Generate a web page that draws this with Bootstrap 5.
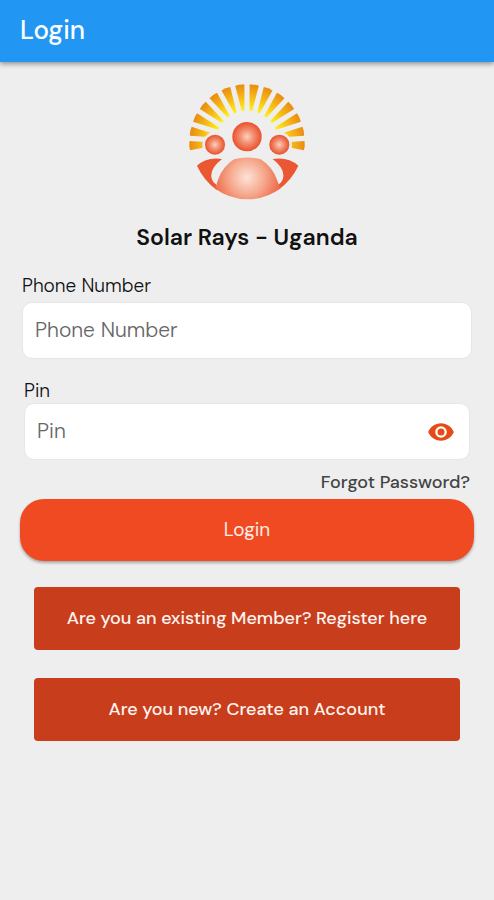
<!DOCTYPE html>
<html lang="en">
<head>
<meta charset="utf-8">
<meta name="viewport" content="width=device-width, initial-scale=1">
<title>Login</title>
<link href="https://cdn.jsdelivr.net/npm/bootstrap@5.3.0/dist/css/bootstrap.min.css" rel="stylesheet">
<style>
body { background: #eee; color: #111; font-family: "DM Sans", Inter, "Liberation Sans", sans-serif; }
.top-bar { background: #2196f3; height: 62px; padding-bottom: 2px; box-shadow: 0 2px 5px rgba(0,0,0,.4); }
.top-title { font-size: 26px; line-height: 32px; font-weight: 500; }
.logo { width: 120px; height: 120px; }
.org-name { font-size: 23px; line-height: 30px; font-weight: 600; }
.login-form { padding-top: 22px; }
.field-label { font-size: 19px; line-height: 24px; font-weight: 300; }
.field-box { background: #fff; border: 1px solid #e6e6e6; border-radius: 10px; height: 57px; }
.field-box .form-control { font-size: 21px; line-height: 28px; font-weight: 300; color: #222; padding-bottom: 8px; }
.field-box .form-control::placeholder { color: #666; }
.phone-group { padding: 0 2px; }
.phone-box { margin-top: 4px; }
.pin-group { padding: 20px 4px 0; }
.eye { color: #e64a19; margin-right: 14px; }
.forgot { font-size: 18px; line-height: 24px; color: #444; font-weight: 500; }
.forgot-row { padding: 10px 0 4px; }
.btn-login { background: #f04a22; color: #ffe9e0; font-size: 19px; height: 62px; border-radius: 24px; box-shadow: 0 2px 3px rgba(0,0,0,.3); }
.btn-alt { background: #c83e1d; color: #fff3ee; font-size: 18px; font-weight: 500; height: 63px; border-radius: 4px; }
.btn-login:hover, .btn-alt:hover { background: #b93718; color: #fff; }
.side-pad { padding-left: 20px; padding-right: 20px; }
.alt-actions { padding: 26px 14px 0; gap: 28px; }
</style>
</head>
<body>
<header class="top-bar d-flex align-items-center side-pad">
  <h1 class="top-title text-white mb-0">Login</h1>
</header>
<main class="side-pad">
  <div class="text-center pt-3">
    <svg class="logo mt-1" viewBox="22 20 360 360" role="img" aria-label="Solar Rays logo">
      <defs>
        <radialGradient id="rayFill" gradientUnits="userSpaceOnUse" cx="202" cy="200" r="174">
          <stop offset=".54" stop-color="#fff21a"/><stop offset=".78" stop-color="#f6b915"/><stop offset="1" stop-color="#ea8a12"/>
        </radialGradient>
        <radialGradient id="headFill"><stop offset="0" stop-color="#fbd0bd"/><stop offset=".5" stop-color="#f28b6c"/><stop offset="1" stop-color="#e9512e"/></radialGradient>
        <radialGradient id="bodyFill" gradientUnits="userSpaceOnUse" cx="202" cy="306" r="106">
          <stop offset="0" stop-color="#fde3d6"/><stop offset=".5" stop-color="#f6a88d"/><stop offset="1" stop-color="#ec623f"/>
        </radialGradient>
        <path id="ray" d="M188 28Q202 25 216 28L206 106H198Z"/>
      </defs>
      <g fill="url(#rayFill)">
        <use href="#ray" transform="rotate(-93.6 202 200)"/><use href="#ray" transform="rotate(-79.2 202 200)"/>
        <use href="#ray" transform="rotate(-64.8 202 200)"/><use href="#ray" transform="rotate(-50.4 202 200)"/>
        <use href="#ray" transform="rotate(-36 202 200)"/><use href="#ray" transform="rotate(-21.6 202 200)"/>
        <use href="#ray" transform="rotate(-7.2 202 200)"/><use href="#ray" transform="rotate(7.2 202 200)"/>
        <use href="#ray" transform="rotate(21.6 202 200)"/><use href="#ray" transform="rotate(36 202 200)"/>
        <use href="#ray" transform="rotate(50.4 202 200)"/><use href="#ray" transform="rotate(64.8 202 200)"/>
        <use href="#ray" transform="rotate(79.2 202 200)"/><use href="#ray" transform="rotate(93.6 202 200)"/>
      </g>
      <g fill="#eee"><circle cx="106" cy="208" r="38"/><circle cx="299" cy="208" r="38"/></g>
      <g fill="url(#headFill)"><circle cx="202" cy="184" r="44"/><circle cx="106" cy="208" r="30"/><circle cx="299" cy="208" r="30"/></g>
      <path fill="#ea5732" d="M52 271Q82 244 127 251Q92 278 95 304Q97 319 109 327L112 345Q72 315 52 271ZM356 271Q326 244 279 251Q314 278 311 304Q309 319 297 327L294 345Q336 315 356 271Z"/>
      <path fill="url(#bodyFill)" d="M104 338Q112 328 114 316Q128 274 163 252Q202 241 243 252Q279 274 293 316Q296 328 304 338Q258 372 204 372Q149 372 104 338Z"/>
    </svg>
    <h2 class="org-name mt-3 mb-0 pt-1">Solar Rays - Uganda</h2>
  </div>
  <form class="login-form">
    <div class="phone-group">
      <label class="field-label d-block" for="phone">Phone Number</label>
      <div class="field-box phone-box d-flex">
        <input class="form-control border-0 bg-transparent shadow-none" id="phone" type="tel" placeholder="Phone Number">
      </div>
    </div>
    <div class="pin-group">
      <label class="field-label d-block" for="pin">Pin</label>
      <div class="field-box d-flex align-items-center">
        <input class="form-control border-0 bg-transparent shadow-none h-100" id="pin" type="password" placeholder="Pin">
        <button class="eye btn border-0 p-0 d-flex" type="button" aria-label="Show pin">
          <svg width="28" height="28" viewBox="0 0 24 24" fill="currentColor"><path d="M12 4.500C7 4.500 2.700 7.600 1 12c1.700 4.400 6 7.500 11 7.500s9.300-3.100 11-7.500C21.300 7.600 17 4.500 12 4.500zM12 17a5 5 0 1 1 0-10 5 5 0 0 1 0 10zm0-8a3 3 0 1 0 0 6 3 3 0 0 0 0-6z"/></svg>
        </button>
      </div>
      <div class="forgot-row text-end"><a class="forgot text-decoration-none d-inline-block" href="#">Forgot Password?</a></div>
    </div>
    <button class="btn btn-login border-0 w-100" type="submit">Login</button>
    <div class="alt-actions d-flex flex-column">
      <button class="btn btn-alt border-0 w-100" type="button">Are you an existing Member? Register here</button>
      <button class="btn btn-alt border-0 w-100" type="button">Are you new? Create an Account</button>
    </div>
  </form>
</main>
<script src="https://cdn.jsdelivr.net/npm/bootstrap@5.3.0/dist/js/bootstrap.bundle.min.js"></script>
</body>
</html>
